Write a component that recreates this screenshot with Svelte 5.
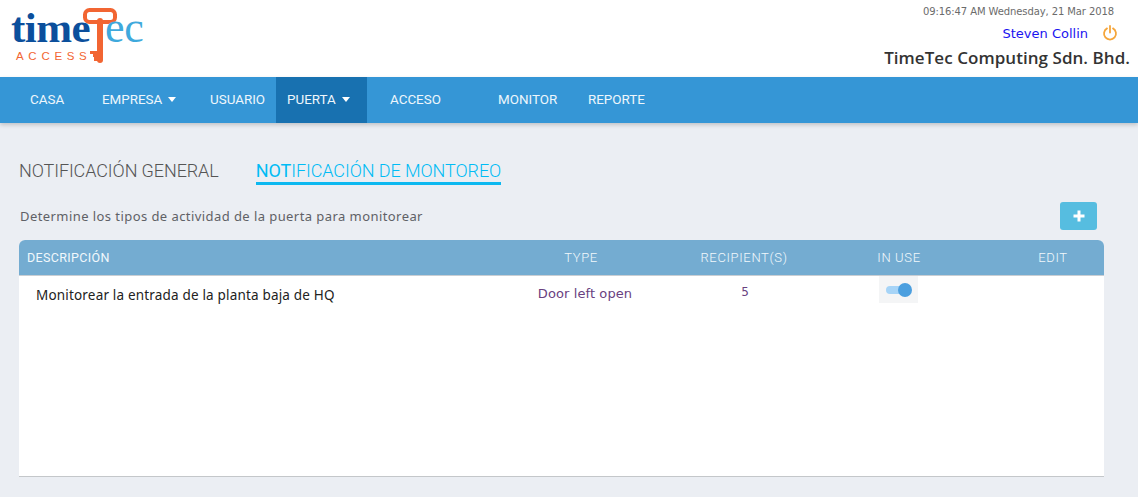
<script>
  const nav = [
    { label: 'CASA', width: 72, pad: 30 },
    { label: 'EMPRESA', width: 108, pad: 30, caret: true },
    { label: 'USUARIO', width: 96, pad: 30 },
    { label: 'PUERTA', width: 91, pad: 11, caret: true, active: true },
    { label: 'ACCESO', width: 108, pad: 23 },
    { label: 'MONITOR', width: 90, pad: 23 },
    { label: 'REPORTE', width: 100, pad: 23 }
  ];
</script>

<div class="page">
  <header class="top">
    <div class="logo">
      <svg class="key" width="40" height="58" viewBox="0 0 40 58" aria-hidden="true">
        <rect x="4" y="4" width="30" height="12" rx="4.5" fill="none" stroke="#f26532" stroke-width="4" />
        <path d="M19 15v39" stroke="#f26532" stroke-width="6" stroke-linecap="round" />
        <path d="M17 45h-8v3h3v3h5zM17 51h-4v4h4z" fill="#f26532" />
      </svg>
      <div class="word"><span class="time">time</span><span class="tec">ec</span></div>
      <div class="access">ACCESS</div>
    </div>
    <div class="account">
      <div class="clock">09:16:47 AM Wednesday, 21 Mar 2018</div>
      <div class="user">
        <span>Steven Collin</span>
        <svg width="16" height="16" viewBox="0 0 16 16" aria-hidden="true">
          <path d="M5 3.4a6 6 0 1 0 6 0M8 1v6.5" fill="none" stroke="#f5a63c" stroke-width="1.8" stroke-linecap="round" />
        </svg>
      </div>
      <div class="company">TimeTec Computing Sdn. Bhd.</div>
    </div>
  </header>

  <nav class="nav">
    {#each nav as item}
      <div class="nav-item" class:active={item.active} style="width: {item.width}px; padding-left: {item.pad}px">
        {item.label}
        {#if item.caret}<span class="caret"></span>{/if}
      </div>
    {/each}
  </nav>

  <main class="content">
    <div class="tabs">
      <div class="tab">NOTIFICACIÓN GENERAL</div>
      <div class="tab current"><span class="hot">NOT</span>IFICACIÓN DE MONTOREO</div>
    </div>

    <div class="intro">
      <p>Determine los tipos de actividad de la puerta para monitorear</p>
      <button type="button" class="add" aria-label="Add">
        <svg width="12" height="12" viewBox="0 0 12 12"><path d="M6 0.5v11M0.5 6h11" stroke="#fff" stroke-width="3" /></svg>
      </button>
    </div>

    <section class="table">
      <div class="row head">
        <div class="desc">DESCRIPCIÓN</div>
        <div>TYPE</div>
        <div>RECIPIENT(S)</div>
        <div>IN USE</div>
        <div>EDIT</div>
      </div>
      <div class="row body">
        <div class="desc name">Monitorear la entrada de la planta baja de HQ</div>
        <div class="type">Door left open</div>
        <div class="count">5</div>
        <div class="use">
          <span class="toggle"><span class="track"></span><span class="knob"></span></span>
        </div>
        <div></div>
      </div>
    </section>
  </main>
</div>

<style>
  :global(body) {
    margin: 0;
    background: #ebeef3;
  }

  .page {
    width: 1138px;
    height: 497px;
    overflow: hidden;
    font-family: "Roboto", sans-serif;
  }

  .top {
    display: flex;
    justify-content: space-between;
    height: 77px;
    background: #fff;
  }

  .logo {
    position: relative;
    width: 200px;
  }

  .key {
    position: absolute;
    left: 81px;
    top: 6px;
  }

  .word {
    position: absolute;
    left: 11px;
    top: 7px;
    display: flex;
    font-family: "Liberation Serif", serif;
    font-weight: 700;
    font-size: 43px;
    line-height: 42px;
    letter-spacing: -0.5px;
  }

  .time {
    color: #0b4f9c;
    width: 94px;
  }

  .tec {
    color: #3fa9dc;
    font-size: 44px;
    font-weight: 400;
    letter-spacing: -0.3px;
  }

  .access {
    position: absolute;
    left: 16px;
    top: 49px;
    font-family: "Liberation Sans", sans-serif;
    font-size: 11.5px;
    line-height: 14px;
    letter-spacing: 4.7px;
    color: #f26532;
  }

  .account {
    display: flex;
    flex-direction: column;
    align-items: flex-end;
    padding: 5px 8px 0 0;
  }

  .clock {
    padding-right: 16px;
    font-family: "DejaVu Sans", sans-serif;
    font-size: 10px;
    line-height: 14px;
    letter-spacing: -0.1px;
    color: #6b6b6b;
  }

  .user {
    display: flex;
    align-items: center;
    gap: 14px;
    height: 20px;
    margin-top: 4px;
    padding-right: 12px;
    font-family: "DejaVu Sans", sans-serif;
    font-size: 13px;
    color: #1a14f0;
  }

  .company {
    margin-top: 4px;
    font-family: "Open Sans", sans-serif;
    font-weight: 600;
    font-size: 17px;
    line-height: 22px;
    letter-spacing: 0.05px;
    color: #333;
  }

  .nav {
    display: flex;
    height: 46px;
    background: #3596d6;
    box-shadow: 0 2px 4px rgba(0, 0, 0, 0.18);
  }

  .nav-item {
    display: flex;
    align-items: center;
    gap: 6px;
    box-sizing: border-box;
    padding-bottom: 1px;
    font-size: 13.4px;
    color: #eef6fc;
    white-space: nowrap;
  }

  .nav-item.active {
    background: #1871b0;
  }

  .caret {
    width: 0;
    height: 0;
    border-left: 4.5px solid transparent;
    border-right: 4.5px solid transparent;
    border-top: 5px solid #fff;
  }

  .content {
    padding: 35px 34px 0 19px;
  }

  .tabs {
    display: flex;
    gap: 37px;
    height: 27px;
  }

  .tab {
    font-size: 18px;
    font-weight: 300;
    line-height: 26px;
    color: #555;
    letter-spacing: -0.1px;
  }

  .tab.current {
    height: 24px;
    border-bottom: 3px solid #0cb8f0;
    color: #00bcf5;
    letter-spacing: -0.08px;
  }

  .hot {
    font-weight: 400;
  }

  .intro {
    display: flex;
    justify-content: space-between;
    align-items: center;
    height: 28px;
    margin-top: 17px;
    padding-right: 7px;
  }

  .intro p {
    margin: 0;
    padding-left: 1px;
    font-family: "Noto Sans", sans-serif;
    font-size: 13px;
    letter-spacing: 0.43px;
    color: #5f6166;
  }

  .add {
    display: flex;
    align-items: center;
    justify-content: center;
    width: 37px;
    height: 28px;
    padding: 0;
    border: 0;
    border-radius: 3px;
    background: #56bde0;
  }

  .table {
    height: 236px;
    margin-top: 10px;
    background: #fff;
    border-bottom: 1px solid #c4c7ca;
    border-radius: 6px 6px 0 0;
  }

  .row {
    display: grid;
    grid-template-columns: 451px 222px 104px 206px 102px;
    text-align: center;
  }

  .head {
    height: 35px;
    line-height: 35px;
    border-bottom: 1px solid #c9ced3;
    border-radius: 6px 6px 0 0;
    background: #74acd1;
    font-size: 13px;
    font-weight: 300;
    color: #f1f8fc;
    letter-spacing: 0.65px;
  }

  .desc {
    padding-left: 8px;
    text-align: left;
  }

  .head .desc {
    font-size: 12.5px;
    font-weight: 400;
    letter-spacing: 0.35px;
  }

  .body {
    height: 40px;
    align-items: start;
  }

  .name {
    padding: 10px 0 0 17px;
    font-family: "Noto Sans", sans-serif;
    font-size: 13.5px;
    line-height: 18px;
    letter-spacing: 0.18px;
    color: #222;
  }

  .type {
    padding: 9px 0 0 8px;
    font-family: "DejaVu Sans", sans-serif;
    font-size: 13px;
    line-height: 18px;
    letter-spacing: 0.1px;
    color: #69417f;
  }

  .count {
    padding: 7px 0 0 2px;
    font-family: "DejaVu Sans", sans-serif;
    font-size: 12px;
    line-height: 18px;
    color: #69417f;
  }

  .use {
    display: flex;
    justify-content: center;
    padding-right: 2px;
  }

  .toggle {
    position: relative;
    display: block;
    width: 39px;
    height: 27px;
    background: #f4f5f6;
  }

  .track {
    position: absolute;
    left: 7px;
    top: 10px;
    width: 22px;
    height: 8px;
    border-radius: 4px;
    background: #a6d4f7;
  }

  .knob {
    position: absolute;
    left: 19px;
    top: 7px;
    width: 14px;
    height: 14px;
    border-radius: 50%;
    background: #4b9fdf;
  }
</style>
